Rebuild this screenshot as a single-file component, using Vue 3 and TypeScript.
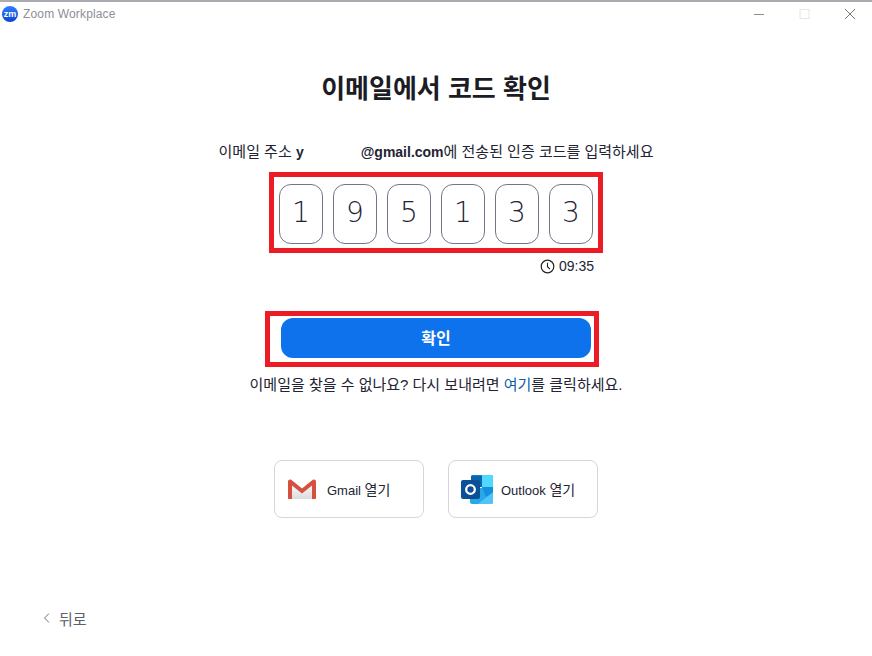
<script setup lang="ts">
const digits = [1, 9, 5, 1, 3, 3]
</script>

<template>
  <div class="window">
    <div class="titlebar">
      <div class="app">
        <span class="logo">zm</span>
        <span class="app-name">Zoom Workplace</span>
      </div>
      <div class="controls">
        <svg width="12" height="12" viewBox="0 0 12 12"><path d="M1 6.500h10" stroke="#8f8f8f" fill="none" /></svg>
        <svg width="12" height="12" viewBox="0 0 12 12"><rect x="1" y="1.500" width="9" height="9" stroke="#e6e6e6" fill="none" /></svg>
        <svg width="12" height="12" viewBox="0 0 12 12"><path d="M1 1l10 10M11 1L1 11" stroke="#777" fill="none" /></svg>
      </div>
    </div>

    <main class="content">
      <h1 class="title">이메일에서 코드 확인</h1>
      <p class="sub">
        <span class="ko">이메일 주소 </span><b>y</b><span class="masked"></span><b>@gmail.com</b><span class="ko">에 전송된 인증 코드를 입력하세요</span>
      </p>

      <div class="code-frame">
        <div v-for="(d, i) in digits" :key="i" class="digit">{{ d }}</div>
      </div>

      <div class="timer">
        <svg width="15" height="15" viewBox="0 0 15 15">
          <circle cx="7.500" cy="7.500" r="6.300" stroke="#222" stroke-width="1.200" fill="none" />
          <path d="M7.500 3.800v3.900l2.400 2.400" stroke="#222" stroke-width="1.100" fill="none" />
        </svg>
        <span>09:35</span>
      </div>

      <div class="confirm-frame">
        <button class="confirm" type="button">확인</button>
      </div>

      <p class="resend">이메일을 찾을 수 없나요? 다시 보내려면 <a class="link">여기</a>를 클릭하세요.</p>

      <div class="mail-row">
        <button class="mail-btn" type="button">
          <svg width="30" height="22" viewBox="0 0 30 22">
            <defs>
              <linearGradient id="gm" x1="0" y1="0" x2="0" y2="1">
                <stop offset="0" stop-color="#ffffff" />
                <stop offset="1" stop-color="#dcdcdc" />
              </linearGradient>
            </defs>
            <path d="M3 3l12 9.500L27 3v18H3z" fill="url(#gm)" />
            <path d="M1 3.500C1 1.800 3 .9 4.500 1.900L15 10.500 25.500 1.900C27 .9 29 1.800 29 3.500V20c0 .6-.4 1-1 1H25V7.500l-10 8-10-8V21H2c-.6 0-1-.4-1-1z" fill="#d5503f" />
          </svg>
          <span>Gmail <span class="ko">열기</span></span>
        </button>
        <button class="mail-btn outlook" type="button">
          <svg width="33" height="29" viewBox="0 0 33 29">
            <path d="M10 1.500C10 .7 10.700 0 11.500 0H30.500C31.300 0 32 .7 32 1.500V12H10z" fill="#0f7fd0" />
            <rect x="10" y="1" width="11" height="11" fill="#0a64b0" />
            <path d="M21 0h9.500c.8 0 1.500.7 1.500 1.500V12l-3 2H21z" fill="#50d9ff" />
            <path d="M9 13H32V27c0 1.100-.9 2-2 2H11c-1.100 0-2-.9-2-2z" fill="#28a8ea" />
            <path d="M17 29L32 17V27c0 1.100-.9 2-2 2z" fill="#50c5f5" />
            <path d="M21 12H32v5l-7 5z" fill="#1490df" />
            <rect x="0" y="5" width="19" height="19" rx="2" fill="#0b4f94" />
            <circle cx="9.500" cy="14.500" r="4.300" stroke="#fff" stroke-width="2.300" fill="none" />
          </svg>
          <span>Outlook <span class="ko">열기</span></span>
        </button>
      </div>
    </main>

    <footer class="footer">
      <svg width="7" height="10" viewBox="0 0 7 10"><path d="M6 .5L1.500 5 6 9.500" stroke="#707070" fill="none" /></svg>
      <span>뒤로</span>
    </footer>
  </div>
</template>

<style scoped>
.window {
  width: 872px;
  height: 656px;
  box-sizing: border-box;
  border-top: 2px solid #a9abb0;
  background: #fff;
  display: flex;
  flex-direction: column;
  font-family: "Liberation Sans", "Noto Sans CJK KR", sans-serif;
  color: #232333;
  overflow: hidden;
}
.titlebar {
  height: 24px;
  flex: none;
  display: flex;
  align-items: center;
  justify-content: space-between;
  padding: 0 16px 0 2px;
}
.app {
  display: flex;
  align-items: center;
  gap: 5px;
}
.logo {
  width: 16px;
  height: 16px;
  border-radius: 50%;
  background: linear-gradient(#2f7dff, #0b45d0);
  color: #fff;
  font-size: 9px;
  font-weight: 700;
  line-height: 16px;
  text-align: center;
}
.app-name {
  font-size: 12px;
  letter-spacing: 0.15px;
  color: #8e8e96;
}
.controls {
  display: flex;
  gap: 33.500px;
  align-items: center;
}
.content {
  flex: 1;
  display: flex;
  flex-direction: column;
  align-items: center;
}
.title {
  margin: 43px 0 0;
  font-size: 26px;
  line-height: 40px;
  font-weight: 700;
  color: #1c1c24;
}
.sub {
  margin: 33px 0 0;
  font-size: 14px;
  line-height: 20px;
  white-space: pre-wrap;
}
.sub b {
  font-weight: 700;
}
.ko {
  font-size: 15px;
}
.masked {
  display: inline-block;
  width: 57px;
}
.code-frame {
  margin-top: 10px;
  box-sizing: border-box;
  width: 334px;
  height: 81px;
  padding-top: 2px;
  border: 5px solid #ed1c24;
  display: flex;
  justify-content: center;
  align-items: center;
  gap: 10px;
}
.digit {
  box-sizing: border-box;
  width: 44px;
  height: 60px;
  padding-bottom: 3px;
  border: 1px solid #747487;
  border-radius: 12px;
  display: flex;
  align-items: center;
  justify-content: center;
  font-family: "DejaVu Sans", sans-serif;
  font-weight: 200;
  font-size: 28px;
  color: #232333;
}
.timer {
  align-self: flex-end;
  margin: 5px 278px 0 0;
  height: 16px;
  display: flex;
  align-items: center;
  gap: 4px;
  font-size: 14px;
}
.confirm-frame {
  margin-top: 37px;
  margin-right: 8px;
  box-sizing: border-box;
  width: 334px;
  height: 56px;
  padding: 0 0 2px 8px;
  border: 5px solid #ed1c24;
  display: flex;
  justify-content: center;
  align-items: center;
}
.confirm {
  flex: none;
  width: 310px;
  height: 40px;
  border: none;
  border-radius: 12px;
  background: #0e72ed;
  color: #fff;
  font-family: inherit;
  font-size: 16px;
  font-weight: 700;
  padding: 0 0 2px;
}
.resend {
  margin: 8px 0 0;
  font-size: 15px;
  line-height: 20px;
}
.link {
  color: #0e5ba8;
}
.mail-row {
  margin: 65px 0 0;
  display: flex;
  gap: 24px;
}
.mail-btn {
  box-sizing: border-box;
  width: 150px;
  height: 58px;
  background: #fff;
  border: 1px solid #d5d5da;
  border-radius: 8px;
  display: flex;
  align-items: center;
  gap: 10px;
  padding: 0 0 0 12px;
  font-family: inherit;
  font-size: 13px;
  color: #232333;
}
.mail-btn.outlook {
  gap: 7px;
}
.mail-btn .ko {
  font-size: 14px;
}
.footer {
  flex: none;
  height: 38px;
  margin-bottom: 19px;
  padding-left: 43px;
  display: flex;
  align-items: center;
  gap: 9px;
  font-size: 15px;
  color: #5e5e68;
}
</style>
